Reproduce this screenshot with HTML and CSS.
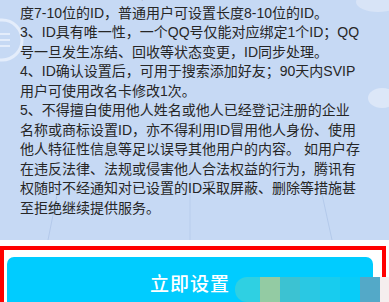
FILE: index.html
```html
<!DOCTYPE html>
<html>
<head>
  <title>ID设置</title>
  <link rel="stylesheet" href="styles.css">
</head>
<body>
  <section class="rules">
    <!-- faint background art of the card -->
    <svg class="rules-art" width="389" height="240" viewBox="0 0 389 240">
      <circle cx="2" cy="40" r="20" fill="none" stroke="#e4edfb" stroke-width="3"/>
      <line x1="-8" y1="34" x2="10" y2="34" stroke="#e4edfb" stroke-width="2"/>
      <line x1="-8" y1="40" x2="10" y2="40" stroke="#e4edfb" stroke-width="2"/>
      <line x1="-8" y1="46" x2="10" y2="46" stroke="#e4edfb" stroke-width="2"/>
      <line x1="58" y1="190" x2="48" y2="240" stroke="#b3c9ea" stroke-width="1"/>
      <line x1="190" y1="160" x2="190" y2="240" stroke="#b8cdec" stroke-width="1"/>
      <line x1="320" y1="185" x2="332" y2="240" stroke="#b3c9ea" stroke-width="1"/>
      <ellipse cx="382" cy="98" rx="14" ry="10" fill="#dce7f8"/>
      <ellipse cx="378" cy="2" rx="22" ry="10" fill="#d8e4f7"/>
    </svg>
    <div class="rules-text">
      <p>2、ID需以字母开头，SVIP用户可设置长</p>
      <p>度7-10位的ID，普通用户可设置长度8-10位的ID。</p>
      <p>3、ID具有唯一性，一个QQ号仅能对应绑定1个ID；QQ</p>
      <p>号一旦发生冻结、回收等状态变更，ID同步处理。</p>
      <p>4、ID确认设置后，可用于搜索添加好友；90天内SVIP</p>
      <p>用户可使用改名卡修改1次。</p>
      <p>5、不得擅自使用他人姓名或他人已经登记注册的企业</p>
      <p>名称或商标设置ID，亦不得利用ID冒用他人身份、使用</p>
      <p>他人特征性信息等足以误导其他用户的内容。 如用户存</p>
      <p>在违反法律、法规或侵害他人合法权益的行为，腾讯有</p>
      <p>权随时不经通知对已设置的ID采取屏蔽、删除等措施甚</p>
      <p>至拒绝继续提供服务。</p>
    </div>
  </section>

  <div class="highlight">
    <button class="set-button">立即设置</button>
  </div>

  <!-- pixelated watermark over the button -->
  <div class="mosaic">
    <span class="m1"></span><span class="m2"></span><span class="m3"></span><span class="m4"></span>
    <span class="m5"></span><span class="m6"></span><span class="m7"></span><span class="m8"></span>
  </div>
</body>
</html>
```

FILE: styles.css
```css
body {
  margin: 0;
  width: 389px;
  height: 302px;
  overflow: hidden;
  background: #fff;
  font-family: "Liberation Sans", "Noto Sans CJK SC", sans-serif;
  position: relative;
}
.rules {
  position: relative;
  height: 240px;
  background: #c6d9f4;
  overflow: hidden;
}
.rules-art {
  position: absolute;
  left: 0;
  top: 0;
}
.rules-text {
  position: relative;
  margin-top: -16px;
  padding-left: 20px;
}
.rules-text p {
  margin: 0;
  font-size: 14px;
  line-height: 19.5px;
  color: #262626;
  white-space: nowrap;
}
.highlight {
  margin-top: 6px;
  width: 372px;
  height: 60px;
  border: 4px solid #ff0000;
  border-bottom: none;
  padding: 7px 3px 0;
}
.set-button {
  display: block;
  width: 366px;
  height: 56px;
  border: none;
  border-radius: 7px 7px 0 0;
  background: #00ccff;
  color: #fff;
  font-family: "Noto Sans CJK SC", sans-serif;
  font-size: 19px;
  font-weight: 500;
  letter-spacing: 1px;
  padding: 0 0 6px;
}
.mosaic {
  position: absolute;
  left: 235px;
  top: 277px;
  display: flex;
}
.mosaic span {
  display: block;
  width: 20px;
  height: 25px;
}
.mosaic .m1 { width: 25px; background: #2fd0e2; border-radius: 12px 0 0 12px; }
.mosaic .m2 { background: #93cba3; }
.mosaic .m3 { background: #3cc2d2; }
.mosaic .m4 { background: #2ac8e3; }
.mosaic .m5 { background: #18ccee; }
.mosaic .m6 { background: #08ccf8; }
.mosaic .m7 { background: #53a9c8; }
.mosaic .m8 { width: 9px; background: #f5eeee; }
```
